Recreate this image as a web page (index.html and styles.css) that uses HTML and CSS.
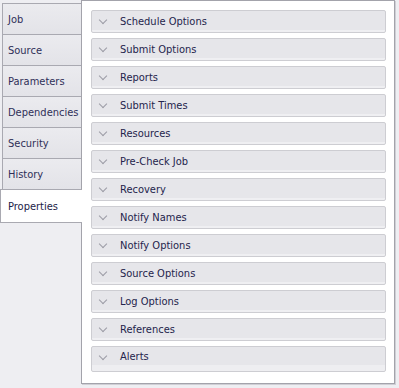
FILE: index.html
```html
<html>
    <head>
        <title>Job properties</title>
        <meta charset="UTF-8" />
        <link rel="stylesheet" href="styles.css">
    </head>
    <body>
        <div class="frame">
            <div class="tabs">
                <div class="tab">Job</div>
                <div class="tab">Source</div>
                <div class="tab">Parameters</div>
                <div class="tab">Dependencies</div>
                <div class="tab">Security</div>
                <div class="tab">History</div>
                <div class="tab active">Properties</div>
            </div>
            <div class="panel">
                <div class="group"><span class="chev"></span>Schedule Options</div>
                <div class="group"><span class="chev"></span>Submit Options</div>
                <div class="group"><span class="chev"></span>Reports</div>
                <div class="group"><span class="chev"></span>Submit Times</div>
                <div class="group"><span class="chev"></span>Resources</div>
                <div class="group"><span class="chev"></span>Pre-Check Job</div>
                <div class="group"><span class="chev"></span>Recovery</div>
                <div class="group"><span class="chev"></span>Notify Names</div>
                <div class="group"><span class="chev"></span>Notify Options</div>
                <div class="group"><span class="chev"></span>Source Options</div>
                <div class="group"><span class="chev"></span>Log Options</div>
                <div class="group"><span class="chev"></span>References</div>
                <div class="group last"><span class="chev"></span>Alerts</div>
            </div>
        </div>
    </body>
</html>
```

FILE: styles.css
```css
body {
    margin: 0;
    background: #eeeef2;
    color: #2f2f58;
    font-family: "DejaVu Sans Condensed", "DejaVu Sans", sans-serif;
    font-stretch: condensed;
    font-size: 11px;
}

.frame {
    display: flex;
    width: 395px;
    height: 384px;
}

/* Left tab strip */
.tabs {
    width: 81px;
    padding-top: 3px;
    display: flex;
    flex-direction: column;
    flex-shrink: 0;
}

.tab {
    height: 30px;
    margin-left: 2px;
    margin-top: -1px;
    padding-left: 5px;
    display: flex;
    align-items: center;
    background: linear-gradient(#ebebef, #e3e3e8);
    border: 1px solid #a9a9b1;
    border-right: none;
}

.tab:first-child {
    margin-top: 0;
}

.tab.active {
    position: relative;
    z-index: 1;
    height: 32px;
    margin-left: 0;
    margin-right: -1px;
    padding-left: 7px;
    background: #fff;
    color: #1c1c48;
}

/* Content panel */
.panel {
    flex: 1;
    background: #fff;
    border: 1px solid #a3a3ab;
    box-shadow: 1px 1px 0 #cfcfd5;
    padding: 9px 8px 0 9px;
    display: flex;
    flex-direction: column;
    gap: 5px;
}

.group {
    height: 21px;
    display: flex;
    align-items: center;
    border: 1px solid #cdcdd2;
    border-radius: 2px;
    background: linear-gradient(#e6e6ea 0, #e6e6ea 19px, #efeff2 19px);
    color: #24244c;
}

.group.last {
    height: 24px;
    align-items: flex-start;
    line-height: 20px;
    background: linear-gradient(#e6e6ea 0, #e6e6ea 18px, #eeeef1 18px);
}

.group.last .chev {
    margin-top: 6px;
}

.chev {
    width: 5px;
    height: 5px;
    margin: 0 14px 3px 8px;
    border-right: 1px solid #9c9ca6;
    border-bottom: 1px solid #9c9ca6;
    transform: rotate(45deg);
}
```
